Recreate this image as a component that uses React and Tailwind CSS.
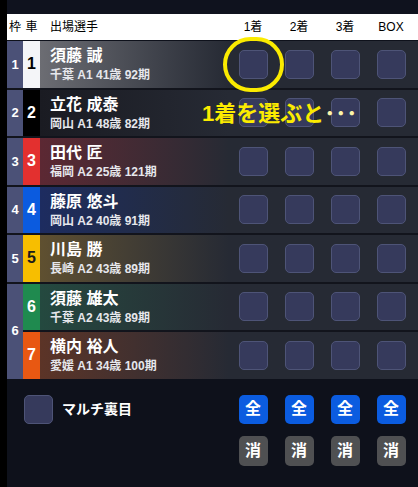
import React from "react";

const racers = [
  { waku: 1, car: 1, name: "須藤 誠", info: "千葉 A1 41歳 92期", carCls: "bg-[#f4f5f8] text-black", grad: "from-[#6c6d73]" },
  { waku: 2, car: 2, name: "立花 成泰", info: "岡山 A1 48歳 82期", carCls: "bg-black text-white", grad: "from-[#1a1b22]" },
  { waku: 3, car: 3, name: "田代 匠", info: "福岡 A2 25歳 121期", carCls: "bg-[#e3302f] text-white", grad: "from-[#5c2833]" },
  { waku: 4, car: 4, name: "藤原 悠斗", info: "岡山 A2 40歳 91期", carCls: "bg-[#0b5bdf] text-white", grad: "from-[#1d2c60]" },
  { waku: 5, car: 5, name: "川島 勝", info: "長崎 A2 43歳 89期", carCls: "bg-[#f7be00] text-[#1a1a1a]", grad: "from-[#5f5030]" },
  { waku: 6, car: 6, name: "須藤 雄太", info: "千葉 A2 43歳 89期", carCls: "bg-[#1f8a4f] text-white", grad: "from-[#24493f]", span: true },
  { waku: null, car: 7, name: "横内 裕人", info: "愛媛 A1 34歳 100期", carCls: "bg-[#e85812] text-white", grad: "from-[#5c3427]" },
];

const font = { fontFamily: '"Liberation Sans", "Noto Sans CJK JP", sans-serif' };

function Box() {
  return <div className="w-[29px] h-[29px] rounded-[5px] bg-[#363a5c] border border-[#4e5477]" />;
}

export default function App() {
  return (
    <div className="relative w-[418px] h-[487px] overflow-hidden bg-[#0e111b] flex" style={font}>
      <div className="w-[7px] bg-black shrink-0" />

      <div className="flex-1 flex flex-col">
        <div className="h-[14px] bg-[#0f121e]" />

        <div className="h-[26px] bg-white flex items-center text-[12px] text-black">
          <div className="w-[16px] text-center">枠</div>
          <div className="w-[17px] text-center">車</div>
          <div className="flex-1 pl-[10px]">出場選手</div>
          <div className="grid grid-cols-4 w-[188px] pr-[4px]">
            <div className="text-center">1着</div>
            <div className="text-center">2着</div>
            <div className="text-center">3着</div>
            <div className="text-center">BOX</div>
          </div>
        </div>

        <div className="mt-[1px] grid grid-cols-[16px_17px_1fr] grid-rows-[repeat(7,46.5px)] gap-y-[2px] bg-[#12141c]">
          {racers.map((r) => (
            <React.Fragment key={r.car}>
              {r.waku !== null && (
                <div
                  className={`bg-[#4b5177] text-white font-bold text-[13px] flex items-center justify-center ${r.span ? "row-span-2" : ""}`}
                >
                  {r.waku}
                </div>
              )}
              <div className={`${r.carCls} font-bold text-[16px] flex items-center justify-center`}>{r.car}</div>
              <div className={`bg-linear-to-r ${r.grad} to-[#262a34] to-50% flex items-center`}>
                <div className="flex-1 pl-[10px] text-white">
                  <div className="text-[16px] font-bold leading-[22px]">{r.name}</div>
                  <div className="text-[12px] font-bold leading-[16px] text-[#e6e7ec]">{r.info}</div>
                </div>
                <div className="grid grid-cols-4 w-[188px] pr-[4px] justify-items-center">
                  <Box />
                  <Box />
                  <Box />
                  <Box />
                </div>
              </div>
            </React.Fragment>
          ))}
        </div>

        <div className="flex pt-[16px]">
          <div className="flex-1 flex items-start pl-[17px]">
            <Box />
            <div className="ml-[9px] h-[29px] flex items-center text-white font-bold text-[14px]">マルチ裏目</div>
          </div>
          <div className="grid grid-cols-4 w-[188px] pr-[4px] justify-items-center gap-y-[12px]">
            {[0, 1, 2, 3].map((i) => (
              <div key={"a" + i} className="w-[29px] h-[29px] rounded-[5px] bg-[#0b5ce0] text-white font-bold text-[16px] flex items-center justify-center">
                全
              </div>
            ))}
            {[0, 1, 2, 3].map((i) => (
              <div key={"b" + i} className="w-[29px] h-[30px] rounded-[5px] bg-[#4f5052] text-white font-bold text-[16px] flex items-center justify-center">
                消
              </div>
            ))}
          </div>
        </div>
      </div>

      {/* annotation */}
      <div className="absolute left-[223px] top-[37px] w-[61px] h-[55px] rounded-full border-[4px] border-[#fbeb00]" />
      <div className="absolute left-[202px] top-[99px] text-[22px] font-bold leading-[30px] text-[#fbeb00] whitespace-nowrap">
        1着を選ぶと<span className="text-[#fdf5a8]">･･･</span>
      </div>
    </div>
  );
}
